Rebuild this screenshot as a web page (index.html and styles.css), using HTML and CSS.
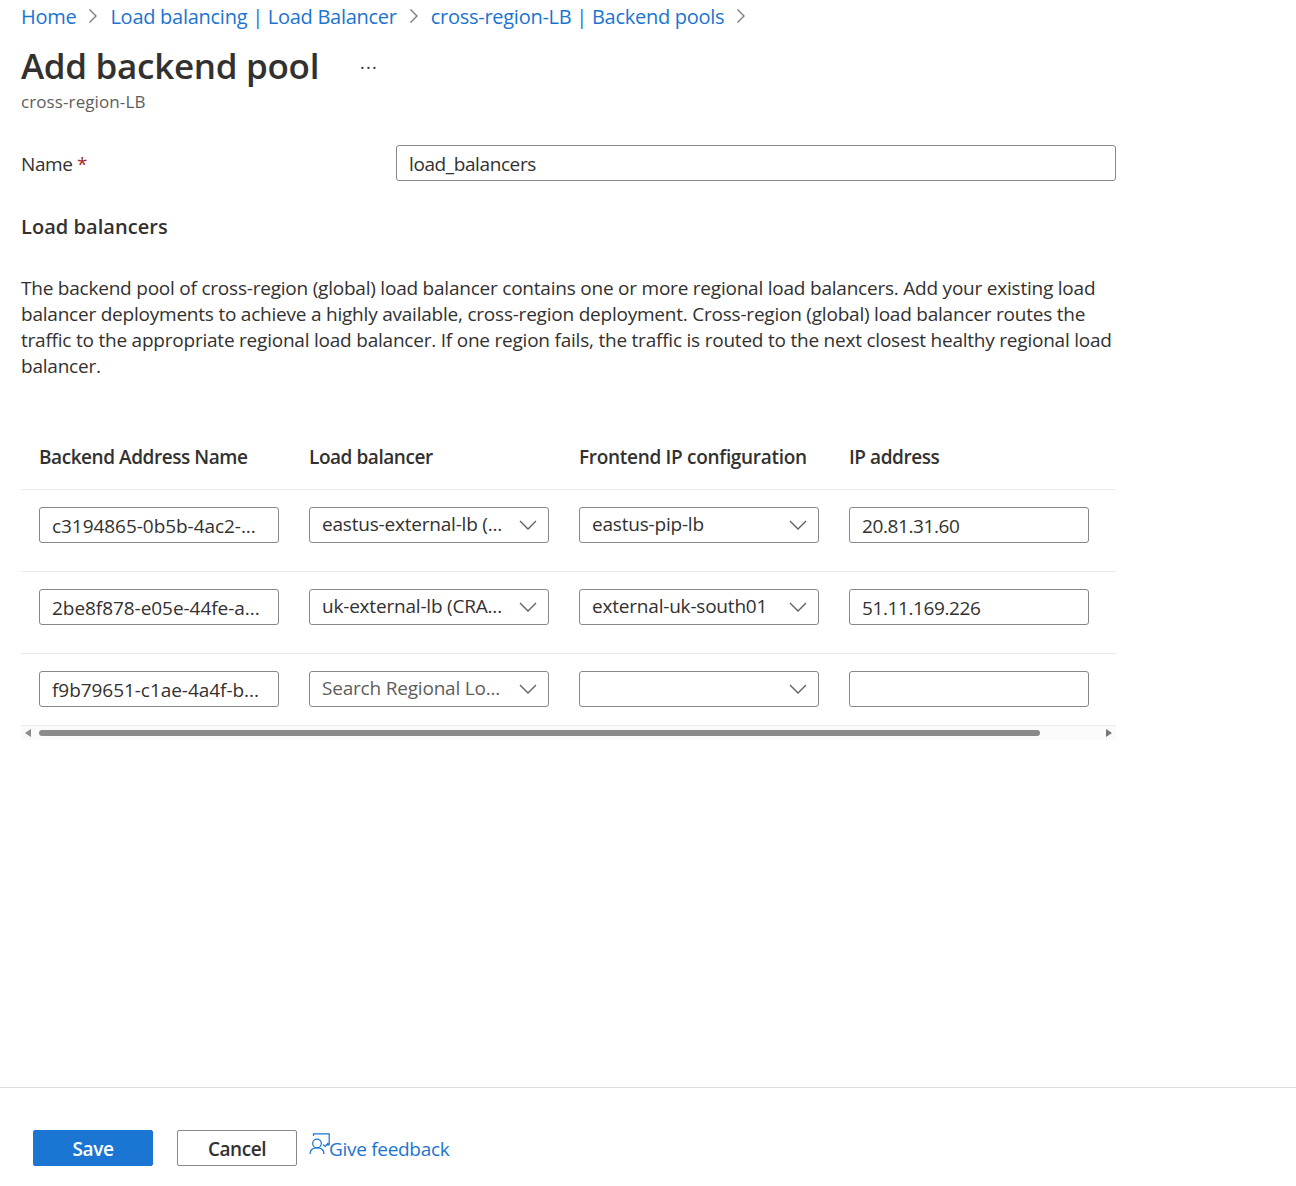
FILE: index.html
```html
<!DOCTYPE html>
<html lang="en">
<head>
    <meta charset="UTF-8">
    <meta name="viewport" content="width=device-width, initial-scale=1.0">
    <title>Add backend pool</title>
    <link rel="stylesheet" href="styles.css">
</head>
<body>
    <div class="page">
        <main class="content">
            <nav class="breadcrumb">
                <a>Home</a>
                <svg class="crumb-sep" width="10" height="16" viewBox="0 0 10 16"><path d="M1.500 1.500 8 8l-6.500 6.500"/></svg>
                <a>Load balancing | Load Balancer</a>
                <svg class="crumb-sep" width="10" height="16" viewBox="0 0 10 16"><path d="M1.500 1.500 8 8l-6.500 6.500"/></svg>
                <a>cross-region-LB | Backend pools</a>
                <svg class="crumb-sep" width="10" height="16" viewBox="0 0 10 16"><path d="M1.500 1.500 8 8l-6.500 6.500"/></svg>
            </nav>

            <div class="title-row">
                <h1>Add backend pool</h1>
                <span class="more">...</span>
            </div>
            <div class="subtitle">cross-region-LB</div>

            <div class="name-row">
                <label>Name <span class="req">*</span></label>
                <div class="field name-field">load_balancers</div>
            </div>

            <h2>Load balancers</h2>
            <p class="intro">The backend pool of cross-region (global) load balancer contains one or more regional load balancers. Add your existing load balancer deployments to achieve a highly available, cross-region deployment. Cross-region (global) load balancer routes the traffic to the appropriate regional load balancer. If one region fails, the traffic is routed to the next closest healthy regional load balancer.</p>

            <div class="grid">
                <div class="grid-row grid-head">
                    <div>Backend Address Name</div>
                    <div>Load balancer</div>
                    <div class="wide-label">Frontend IP configuration</div>
                    <div>IP address</div>
                </div>
                <div class="grid-row">
                    <div class="field guid">c3194865-0b5b-4ac2-...</div>
                    <div class="field select"><span class="val">eastus-external-lb (...</span><svg class="chev" width="18" height="10" viewBox="0 0 18 10"><path d="M1 1l8 8 8-8"/></svg></div>
                    <div class="field select"><span class="val">eastus-pip-lb</span><svg class="chev" width="18" height="10" viewBox="0 0 18 10"><path d="M1 1l8 8 8-8"/></svg></div>
                    <div class="field">20.81.31.60</div>
                </div>
                <div class="grid-row">
                    <div class="field guid">2be8f878-e05e-44fe-a...</div>
                    <div class="field select"><span class="val">uk-external-lb (CRA...</span><svg class="chev" width="18" height="10" viewBox="0 0 18 10"><path d="M1 1l8 8 8-8"/></svg></div>
                    <div class="field select"><span class="val">external-uk-south01</span><svg class="chev" width="18" height="10" viewBox="0 0 18 10"><path d="M1 1l8 8 8-8"/></svg></div>
                    <div class="field">51.11.169.226</div>
                </div>
                <div class="grid-row last">
                    <div class="field guid">f9b79651-c1ae-4a4f-b...</div>
                    <div class="field select"><span class="val placeholder">Search Regional Lo...</span><svg class="chev" width="18" height="10" viewBox="0 0 18 10"><path d="M1 1l8 8 8-8"/></svg></div>
                    <div class="field select"><span class="val"></span><svg class="chev" width="18" height="10" viewBox="0 0 18 10"><path d="M1 1l8 8 8-8"/></svg></div>
                    <div class="field"></div>
                </div>
                <div class="scrollbar">
                    <span class="arrow arrow-left"></span>
                    <div class="track"><div class="thumb"></div></div>
                    <span class="arrow arrow-right"></span>
                </div>
            </div>
        </main>

        <footer class="actions">
            <button class="btn primary">Save</button>
            <button class="btn">Cancel</button>
            <a class="feedback">
                <svg width="21" height="22" viewBox="0 0 21 22"><path d="M4.500 3V.8h15.700v11h-3.500M14 11.500l2.300 2 3-3.500"/><circle cx="8" cy="10.500" r="4.300"/><path d="M1 21c0-4 2.500-6.200 7-6.200s7 2.200 7 6.200"/></svg>
                <span>Give feedback</span>
            </a>
        </footer>
    </div>
</body>
</html>
```

FILE: styles.css
```css
* {
    box-sizing: border-box;
}
body {
    margin: 0;
    font-family: "Open Sans", "Noto Sans", sans-serif;
    font-size: 19px;
    letter-spacing: -0.4px;
    color: #323130;
    background: #fff;
}
.page {
    height: 1186px;
    display: flex;
    flex-direction: column;
}
.content {
    flex: 1;
    padding: 0 180px 0 21px;
}
a {
    color: #1b74d2;
}
.breadcrumb {
    display: flex;
    align-items: center;
    gap: 12px;
    height: 32px;
    font-size: 20px;
    letter-spacing: -0.27px;
}
.crumb-sep {
    fill: none;
    stroke: #767676;
    stroke-width: 1.3;
}
.title-row {
    display: flex;
    align-items: center;
    height: 50px;
    margin-top: 8px;
}
h1 {
    margin: 0;
    font-size: 35px;
    font-weight: 600;
    letter-spacing: -0.3px;
}
.more {
    margin-left: 41px;
    font-size: 18px;
    line-height: 18px;
    padding-bottom: 7px;
    letter-spacing: 1.2px;
}
.subtitle {
    font-size: 17px;
    line-height: 24px;
    color: #605e5c;
    letter-spacing: 0.1px;
}
.name-row {
    display: flex;
    align-items: center;
    margin-top: 31px;
}
.name-row label {
    width: 375px;
    padding-top: 2px;
}
.req {
    color: #a4262c;
}
.field {
    width: 240px;
    height: 36px;
    padding: 0 12px;
    border: 1px solid #8a8886;
    border-radius: 3px;
    line-height: 36px;
    white-space: nowrap;
    overflow: hidden;
}
.guid {
    letter-spacing: -0.05px;
}
.name-field {
    width: 720px;
    color: #323130;
}
h2 {
    margin: 31px 0 0;
    font-size: 20px;
    line-height: 30px;
    font-weight: 600;
    letter-spacing: 0.05px;
}
.intro {
    margin: 33px 0 0;
    line-height: 26px;
    letter-spacing: -0.22px;
}
.grid {
    margin-top: 46px;
}
.grid-row {
    display: flex;
    align-items: flex-start;
    gap: 30px;
    height: 82px;
    padding: 17px 0 0 18px;
    border-top: 1px solid #edebe9;
}
.grid-row.last {
    height: 72px;
}
.grid-head {
    align-items: center;
    height: 64px;
    padding-top: 0;
    border-top: none;
    font-weight: 600;
    letter-spacing: -0.45px;
}
.grid-head div {
    width: 240px;
}
.grid-head .wide-label {
    letter-spacing: -0.3px;
}
.select {
    display: flex;
    align-items: center;
    justify-content: space-between;
}
.val {
    position: relative;
    top: -1px;
    white-space: nowrap;
    letter-spacing: -0.2px;
}
.placeholder {
    color: #605e5c;
}
.chev {
    flex: none;
    margin-right: -1px;
    fill: none;
    stroke: #605e5c;
    stroke-width: 1.3;
}
.scrollbar {
    display: flex;
    align-items: center;
    height: 15px;
    padding: 0 4px;
    background: #fafafa;
    border-top: 1px solid #edebe9;
}
.track {
    flex: 1;
    padding: 0 8px;
}
.thumb {
    width: 1001px;
    height: 6px;
    border-radius: 3px;
    background: #8a8a8a;
}
.arrow {
    width: 0;
    height: 0;
    border-top: 4px solid transparent;
    border-bottom: 4px solid transparent;
}
.arrow-left {
    border-right: 6px solid #8a8a8a;
}
.arrow-right {
    border-left: 6px solid #767676;
}
.actions {
    height: 99px;
    border-top: 1px solid #e1dfdd;
    display: flex;
    align-items: flex-start;
    padding: 42px 0 0 33px;
}
.btn {
    width: 120px;
    height: 36px;
    margin-right: 24px;
    padding: 2px 0 0;
    border: 1px solid #8a8886;
    border-radius: 2px;
    background: #fff;
    color: #323130;
    font-family: inherit;
    font-size: 19px;
    font-weight: 600;
    letter-spacing: -0.45px;
}
.btn.primary {
    background: #1b76d3;
    border-color: #1b76d3;
    color: #fff;
}
.feedback {
    display: flex;
    align-items: center;
    margin-left: -12px;
    height: 36px;
    padding-top: 2px;
    font-size: 19px;
    letter-spacing: -0.3px;
}
.feedback svg {
    flex: none;
    margin-top: -10px;
    margin-right: -1px;
    fill: none;
    stroke: #1b74d2;
    stroke-width: 1.2;
}
```
